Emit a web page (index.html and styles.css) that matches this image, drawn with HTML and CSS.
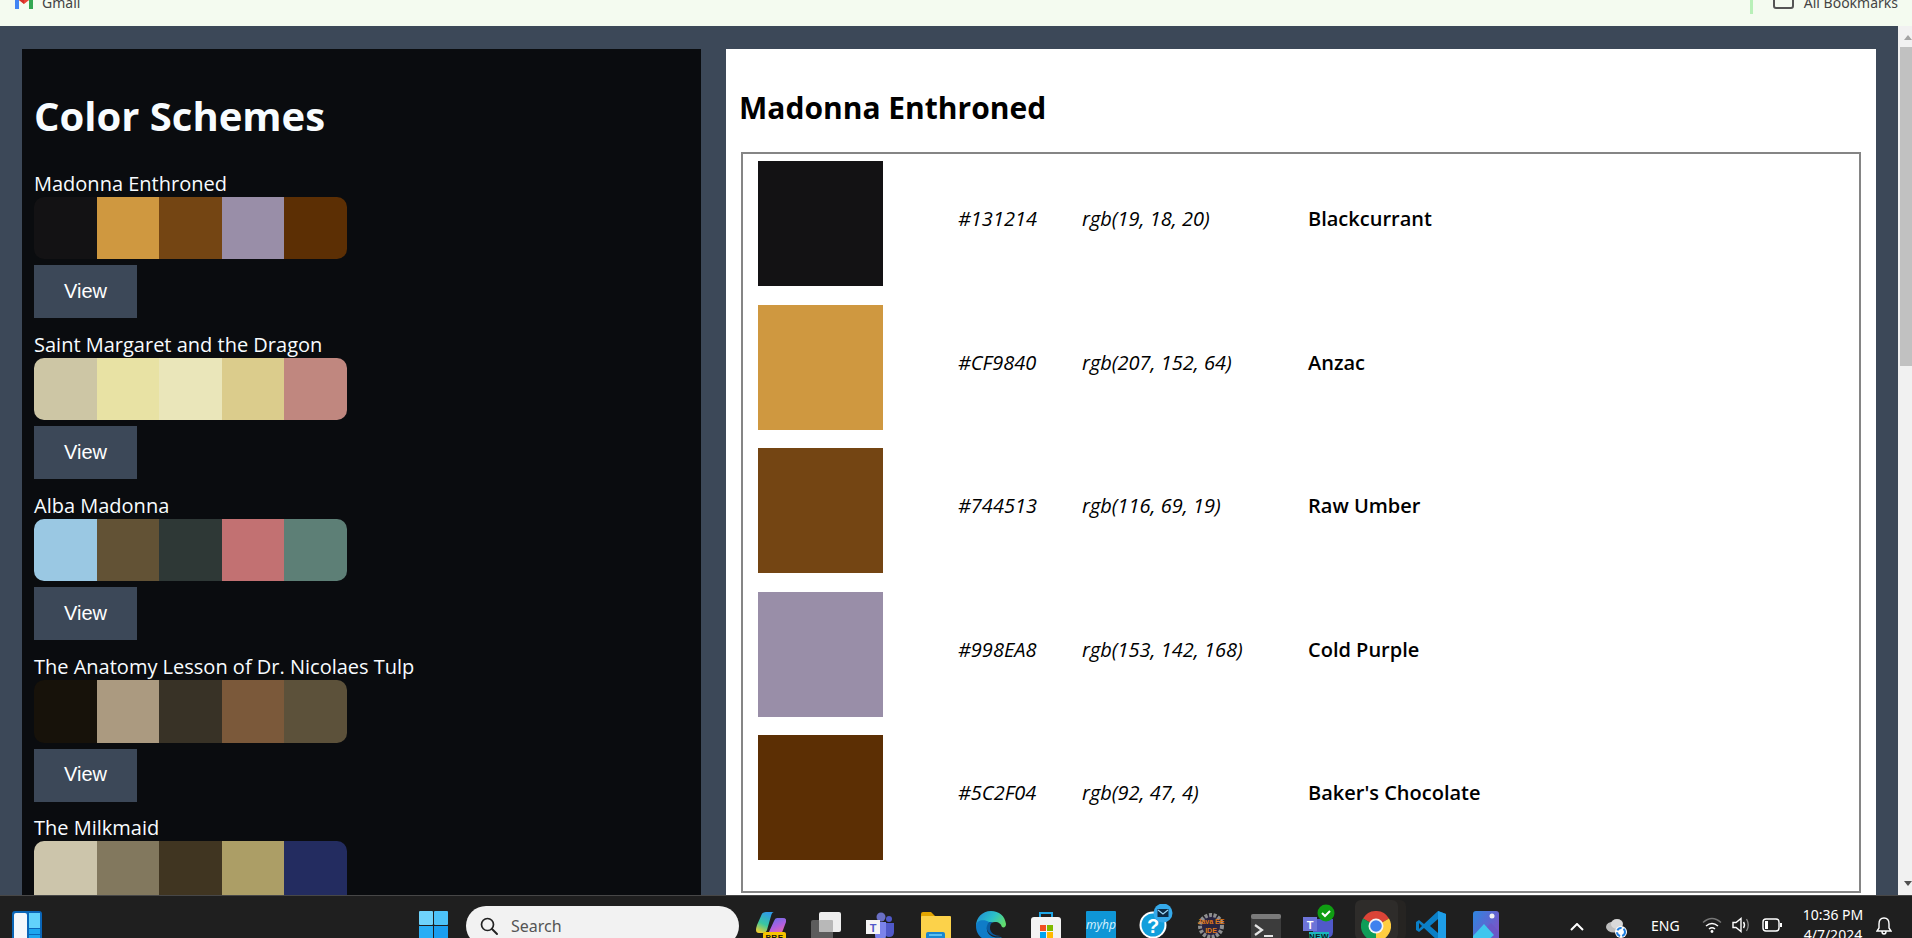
FILE: index.html
```html
<!DOCTYPE html>
<html lang="en">
<head>
<meta charset="utf-8">
<title>Color Schemes</title>
<link rel="stylesheet" href="styles.css">
</head>
<body>
<header class="chrome-bar">
  <div class="chrome-row">
    <a class="bookmark">
      <svg class="gmail" viewBox="0 0 18 14" width="18" height="14"><path fill="#4285f4" d="M0 2v12h4V5z"/><path fill="#34a853" d="M14 5v9h4V2z"/><path fill="#ea4335" d="M0 2l9 7 9-7V0h-2L9 5 2 0H0z"/><path fill="#c5221f" d="M4 5l5 4V5L2 0H0z" opacity=".6"/></svg>
      <span>Gmail</span>
    </a>
    <div class="bookmarks-right">
      <span class="sep"></span>
      <svg class="folder-outline" viewBox="0 0 21 14" width="21" height="14"><path fill="none" stroke="#555" stroke-width="2" d="M1 0v11q0 2 2 2h15q2 0 2-2V0"/></svg>
      <span>All Bookmarks</span>
    </div>
  </div>
</header>

<main class="page">
  <aside class="sidebar">
    <h1 class="sidebar-title">Color Schemes</h1>

    <section class="scheme">
      <div class="scheme-name">Madonna Enthroned</div>
      <div class="strip">
        <i style="background:#131214"></i><i style="background:#cf9840"></i><i style="background:#744513"></i><i style="background:#998ea8"></i><i style="background:#5c2f04"></i>
      </div>
      <button class="view-btn">View</button>
    </section>

    <section class="scheme">
      <div class="scheme-name">Saint Margaret and the Dragon</div>
      <div class="strip">
        <i style="background:#cdc6a5"></i><i style="background:#e8e2a4"></i><i style="background:#eae6ba"></i><i style="background:#dbcc8c"></i><i style="background:#c0877f"></i>
      </div>
      <button class="view-btn">View</button>
    </section>

    <section class="scheme">
      <div class="scheme-name">Alba Madonna</div>
      <div class="strip">
        <i style="background:#9ac8e3"></i><i style="background:#625235"></i><i style="background:#2e3836"></i><i style="background:#c27172"></i><i style="background:#5d7f76"></i>
      </div>
      <button class="view-btn">View</button>
    </section>

    <section class="scheme">
      <div class="scheme-name">The Anatomy Lesson of Dr. Nicolaes Tulp</div>
      <div class="strip">
        <i style="background:#17120a"></i><i style="background:#ab9a80"></i><i style="background:#383226"></i><i style="background:#7b593a"></i><i style="background:#5c513a"></i>
      </div>
      <button class="view-btn">View</button>
    </section>

    <section class="scheme">
      <div class="scheme-name">The Milkmaid</div>
      <div class="strip">
        <i style="background:#ccc5ab"></i><i style="background:#82785e"></i><i style="background:#403521"></i><i style="background:#ac9e66"></i><i style="background:#232c60"></i>
      </div>
      <button class="view-btn">View</button>
    </section>
  </aside>

  <section class="detail">
    <h2 class="detail-title">Madonna Enthroned</h2>
    <div class="color-table">
      <div class="color-row">
        <div class="swatch" style="background:#131214"></div>
        <div class="cell code">#131214</div>
        <div class="cell code">rgb(19, 18, 20)</div>
        <div class="cell color-name">Blackcurrant</div>
      </div>
      <div class="color-row">
        <div class="swatch" style="background:#cf9840"></div>
        <div class="cell code">#CF9840</div>
        <div class="cell code">rgb(207, 152, 64)</div>
        <div class="cell color-name">Anzac</div>
      </div>
      <div class="color-row">
        <div class="swatch" style="background:#744513"></div>
        <div class="cell code">#744513</div>
        <div class="cell code">rgb(116, 69, 19)</div>
        <div class="cell color-name">Raw Umber</div>
      </div>
      <div class="color-row">
        <div class="swatch" style="background:#998ea8"></div>
        <div class="cell code">#998EA8</div>
        <div class="cell code">rgb(153, 142, 168)</div>
        <div class="cell color-name">Cold Purple</div>
      </div>
      <div class="color-row">
        <div class="swatch" style="background:#5c2f04"></div>
        <div class="cell code">#5C2F04</div>
        <div class="cell code">rgb(92, 47, 4)</div>
        <div class="cell color-name">Baker's Chocolate</div>
      </div>
    </div>
  </section>

  <div class="scrollbar">
    <span class="arrow-up"></span>
    <span class="thumb"></span>
    <span class="arrow-down"></span>
  </div>
</main>

<footer class="taskbar">
  <svg class="widgets" viewBox="0 0 30 30" width="30" height="30"><rect width="30" height="30" rx="3" fill="#0a66b8"/><rect x="2" y="2" width="13" height="28" rx="2" fill="#f4f7fb"/><rect x="17" y="2" width="11" height="15" fill="#62d2fb"/><rect x="17" y="18" width="11" height="5" fill="#1ca6ef"/><rect x="17" y="24" width="11" height="6" fill="#1ca6ef"/></svg>

  <svg class="start" viewBox="0 0 29 29" width="29" height="29"><rect width="14" height="14" rx="1" fill="#6fd3fb"/><rect x="15" width="14" height="14" rx="1" fill="#4cc2f8"/><rect y="15" width="14" height="14" fill="#28aef5"/><rect x="15" y="15" width="14" height="14" fill="#1a9ef0"/></svg>

  <div class="search">
    <svg viewBox="0 0 18 18" width="18" height="18"><circle cx="7.5" cy="7.5" r="6" fill="none" stroke="#222" stroke-width="1.7"/><path d="M12 12l5 5" stroke="#222" stroke-width="1.9" stroke-linecap="round"/></svg>
    <span>Search</span>
  </div>

  <div class="apps">
    <div class="app">
      <svg viewBox="0 0 30 30" width="30" height="30"><defs><linearGradient id="cpa" x1=".6" y1="0" x2=".2" y2="1"><stop offset="0" stop-color="#2f9be8"/><stop offset=".55" stop-color="#39c6a0"/><stop offset="1" stop-color="#f4d02e"/></linearGradient><linearGradient id="cpb" x1=".3" y1="0" x2=".8" y2="1"><stop offset="0" stop-color="#6a6fe6"/><stop offset=".5" stop-color="#b05fe0"/><stop offset="1" stop-color="#f36c9c"/></linearGradient></defs><path fill="url(#cpb)" d="M12 23h10q4 0 5-4l3-8q1-4-3-4h-6q-2 0-3 3z"/><path fill="url(#cpa)" d="M10 1h8q-2 0-3 4l-4 14q-1 3-4 3H3q-3 0-3-3 0-2 1-5L5 5q1-4 5-4z"/><rect x="7" y="21" width="23" height="9" rx="2" fill="#f8c400"/><text x="18.500" y="29" class="svg-badge" fill="#111">PRE</text></svg>
    </div>
    <div class="app">
      <svg viewBox="0 0 30 30" width="30" height="30"><rect x="0" y="9" width="22" height="21" rx="2" fill="#5c5c5c"/><rect x="8" y="1" width="22" height="20" rx="2" fill="#eeeeee"/><rect x="8" y="9" width="14" height="12" rx="1" fill="#b8b8b8"/></svg>
    </div>
    <div class="app">
      <svg viewBox="0 0 30 30" width="30" height="30"><circle cx="15" cy="6" r="4.5" fill="#6a6fc4"/><circle cx="23" cy="8" r="3" fill="#5059c9"/><path fill="#7b83eb" d="M9 11h11v13q0 6-5 6-6 0-6-6z"/><path fill="#5059c9" d="M20 12h8v9q0 5-5 5-2 0-3-1z"/><rect x="0" y="9" width="14" height="14" fill="#f5f5f5"/><text x="7" y="21" class="svg-t" fill="#5059c9">T</text></svg>
    </div>
    <div class="app">
      <svg viewBox="0 0 30 30" width="30" height="30"><path fill="#e3a500" d="M0 3q0-2 2-2h8l4 4h14v6H0z"/><rect y="5" width="30" height="25" rx="1" fill="#fcd24a"/><rect x="5" y="21" width="19" height="9" rx="2" fill="#1a86cf"/><rect x="8" y="23" width="13" height="2" fill="#5cc0f0"/></svg>
    </div>
    <div class="app">
      <svg viewBox="0 0 30 30" width="30" height="30"><defs><linearGradient id="edge" x1="0" y1=".2" x2="1" y2=".6"><stop offset="0" stop-color="#1f8fd6"/><stop offset=".55" stop-color="#2cc0c8"/><stop offset="1" stop-color="#62dc6e"/></linearGradient></defs><path fill="url(#edge)" d="M15 0C6 0 0 7 0 15h12c1-3 4-4 7-4 4 0 6 2 7 5 2 1 4 0 4-3C29 5 23 0 15 0z"/><path fill="#0f7cc8" d="M0 15c0 9 7 15 15 15 4 0 8-1 11-4-7 2-14-1-15-7-.5-3 .5-6 2-8C8 8 0 9 0 15z"/><path fill="#0a5aa0" d="M13 11c-3 3-3 8 0 11 3 3 8 4 12 3-6 0-11-3-11-8 0-3 1-5 3-6z"/></svg>
    </div>
    <div class="app">
      <svg viewBox="0 0 30 30" width="30" height="30"><path fill="none" stroke="#1ea7e8" stroke-width="2" d="M9 6V2h12v4"/><rect y="6" width="30" height="24" rx="3" fill="#f3f3f3"/><rect x="9" y="14" width="6" height="6" fill="#f25022"/><rect x="16" y="14" width="6" height="6" fill="#7fba00"/><rect x="9" y="21" width="6" height="6" fill="#00a4ef"/><rect x="16" y="21" width="6" height="6" fill="#ffb900"/></svg>
    </div>
    <div class="app">
      <svg viewBox="0 0 30 30" width="30" height="30"><rect width="30" height="30" rx="1" fill="#0f96d6"/><text x="15" y="18" class="svg-hp" fill="#d8f2ff">myhp</text></svg>
    </div>
    <div class="app app-help">
      <svg viewBox="0 0 36 36" width="36" height="36"><circle cx="15" cy="21" r="13.5" fill="#fff"/><circle cx="15" cy="21" r="11.5" fill="#119fdc"/><text x="15" y="29" class="svg-q" fill="#fff">?</text><circle cx="25" cy="9" r="9.5" fill="#35a9ea"/><rect x="19.500" y="5" width="11" height="8" fill="#0d2a44"/><path d="M20 6l5 4 5-4" fill="none" stroke="#9dd8f7" stroke-width="1.200"/></svg>
    </div>
    <div class="app">
      <svg viewBox="0 0 30 30" width="30" height="30"><circle cx="15" cy="15" r="11" fill="#2a2440" stroke="#8f8f8f" stroke-width="4" stroke-dasharray="3 1.500"/><text x="15" y="13" class="svg-java" fill="#e07a18">Java EE</text><text x="15" y="22" class="svg-java" fill="#e07a18">IDE</text></svg>
    </div>
    <div class="app app-term">
      <svg viewBox="0 0 30 30" width="30" height="30"><rect width="30" height="27" rx="2" fill="#3c3c3c"/><rect width="30" height="5" rx="2" fill="#7a7a7a"/><path d="M4 11l7 5-7 5" fill="none" stroke="#e4e4e4" stroke-width="2.200"/><path d="M13 22h9" stroke="#e4e4e4" stroke-width="2"/></svg>
    </div>
    <div class="app app-teams">
      <svg viewBox="0 0 36 36" width="36" height="36"><path fill="#5059c9" d="M10 15h20v13q0 6-8 6-12 0-12-6z"/><rect x="0" y="13" width="14" height="14" fill="#6d74d8"/><text x="7" y="25" class="svg-t" fill="#fff">T</text><circle cx="23" cy="9" r="8.500" fill="#0f9d12"/><path d="M19 9l3 3 5-5" fill="none" stroke="#fff" stroke-width="2"/><rect x="6" y="28" width="20" height="8" fill="#19b6bb"/><text x="16" y="35" class="svg-badge" fill="#0b1b1b">NEW</text></svg>
    </div>
    <div class="app app-active">
      <span class="active-back"></span>
      <span class="active-tile"></span>
      <svg viewBox="0 0 30 30" width="30" height="30"><path fill="#db4437" d="M15 15L28 7.500A15 15 0 0 0 2 7.500z"/><path fill="#ffcd40" d="M15 15v15A15 15 0 0 0 28 7.500z"/><path fill="#0f9d58" d="M15 15L2 7.500A15 15 0 0 0 15 30z"/><circle cx="15" cy="15" r="7.500" fill="#f5f5f5"/><circle cx="15" cy="15" r="5.800" fill="#3f82ee"/></svg>
    </div>
    <div class="app">
      <svg viewBox="0 0 30 30" width="30" height="30"><path fill="#0b7fc7" d="M22 0l8 3v24l-8 3-14-13-5 4-3-2V11l3-2 5 4z"/><path fill="#1e9ee8" d="M22 0l8 3v24l-8 3z"/><path fill="#1f1f1f" d="M22 8v14l-8-7z"/><path fill="#1f1f1f" d="M3 12v6l3-3z"/></svg>
    </div>
    <div class="app">
      <svg viewBox="0 0 26 30" width="26" height="30"><defs><linearGradient id="ph" x1="0" y1="0" x2="1" y2=".6"><stop offset="0" stop-color="#2d86e0"/><stop offset="1" stop-color="#7a55c8"/></linearGradient></defs><rect width="26" height="30" rx="3" fill="url(#ph)"/><circle cx="19" cy="5" r="2.500" fill="#f2f2f2"/><path fill="#6b58c8" d="M14 16l4-4 8 9v9H12z"/><path fill="#3fc6ee" d="M0 25l11-12 10 11-7 6H0z"/></svg>
    </div>
  </div>

  <div class="tray">
    <svg class="tray-chevron" viewBox="0 0 14 8" width="14" height="8"><path d="M1 7l6-6 6 6" fill="none" stroke="#fff" stroke-width="2"/></svg>
    <svg class="tray-cloud" viewBox="0 0 21 20" width="21" height="20"><ellipse cx="8" cy="9" rx="8" ry="5.500" fill="#bdbdbd"/><ellipse cx="11" cy="6" rx="6" ry="5" fill="#d9d9d9"/><circle cx="15" cy="14" r="6" fill="#fff"/><circle cx="15" cy="14" r="4" fill="none" stroke="#1f7fe0" stroke-width="2" stroke-dasharray="5 2"/></svg>
    <span class="tray-lang">ENG</span>
    <svg class="tray-wifi" viewBox="0 0 20 16" width="20" height="16"><path d="M1 5.500q9-8 18 0" fill="none" stroke="#777" stroke-width="1.400"/><path d="M4 9q6-5 12 0M7 12q3-2.500 6 0" fill="none" stroke="#fff" stroke-width="1.500"/><circle cx="10" cy="14.500" r="1.400" fill="#fff"/></svg>
    <svg class="tray-vol" viewBox="0 0 18 16" width="18" height="16"><path d="M1 5.500h3l5-4v13l-5-4H1z" fill="none" stroke="#fff" stroke-width="1.400"/><path d="M11.500 5q2 3 0 6" fill="none" stroke="#fff" stroke-width="1.400"/><path d="M14.500 2q3.500 6 0 12" fill="none" stroke="#888" stroke-width="1.300"/></svg>
    <svg class="tray-bat" viewBox="0 0 20 14" width="20" height="14"><rect x="1" y="1" width="16" height="12" rx="3" fill="none" stroke="#fff" stroke-width="1.400"/><rect x="3" y="3" width="3" height="8" fill="#fff"/><rect x="18" y="5" width="2" height="4" fill="#fff"/></svg>
    <div class="tray-clock"><div>10:36 PM</div><div>4/7/2024</div></div>
    <svg class="tray-bell" viewBox="0 0 16 18" width="16" height="18"><path d="M8 1q-5 0-5 6v4l-2 3h14l-2-3V7q0-6-5-6zM6 14.500q0 2.500 2 2.500t2-2.500" fill="none" stroke="#fff" stroke-width="1.400"/></svg>
  </div>
</footer>
</body>
</html>
```

FILE: styles.css
```css
* { box-sizing: border-box; }

html, body {
  margin: 0;
  height: 938px;
  overflow: hidden;
}

body {
  display: flex;
  flex-direction: column;
  font-family: "Open Sans", "Noto Sans", sans-serif;
  background: #3c4858;
}

/* Browser bookmarks bar, cropped by the top of the picture */
.chrome-bar {
  height: 26px;
  flex: none;
  overflow: hidden;
  background: #f4fbf0;
}

.chrome-row {
  display: flex;
  justify-content: space-between;
  align-items: center;
  height: 24px;
  margin-top: -10px;
  padding: 0 14px 0 15px;
  font: 14px "Noto Sans", sans-serif;
  color: #444;
}

.bookmark,
.bookmarks-right {
  display: flex;
  align-items: center;
}

.gmail { margin-right: 9px; }

.sep {
  width: 3px;
  height: 24px;
  margin-right: 20px;
  background: #b8f0b8;
}

.folder-outline { margin-right: 10px; }

/* Page */
.page {
  flex: 1;
  min-height: 0;
  display: flex;
  overflow: hidden;
  padding: 23px 0 0 22px;
  background: #3c4858;
}

.sidebar {
  flex: none;
  width: 679px;
  height: 1000px;
  padding: 0 12px;
  background: #0a0c0f;
  color: #f8fcff;
}

.sidebar-title {
  margin: 40px 0 26.7px;
  font-size: 40px;
  line-height: 54px;
  font-weight: 700;
}

.scheme { margin-bottom: 12.65px; }

.scheme-name {
  font-size: 20px;
  line-height: 27px;
}

.strip {
  display: flex;
  width: 313px;
  height: 62.5px;
  border-radius: 10px;
  overflow: hidden;
}

.strip i {
  flex: 1;
  display: block;
}

.view-btn {
  display: block;
  width: 103px;
  height: 53px;
  margin-top: 6px;
  padding: 0 0 1px;
  border: 0;
  background: #3c4858;
  color: #fff;
  font: 20px "Liberation Sans", Arial, sans-serif;
}

.detail {
  flex: none;
  width: 1150px;
  height: 900px;
  margin-left: 25px;
  padding: 38px 15px 0 13px;
  background: #fff;
  color: #000;
}

.detail-title {
  margin: 0 0 24px;
  font-size: 30px;
  line-height: 41px;
  font-weight: 700;
}

.color-table {
  margin-left: 2px;
  height: 741px;
  padding: 7px 14px 0 15px;
  border: 2px solid #858585;
}

.color-row {
  display: grid;
  grid-template-columns: 125px 75px 124px 226px 1fr;
  height: 143.6px;
  align-items: start;
}

.swatch {
  grid-column: 1;
  width: 125px;
  height: 125px;
}

.cell {
  font-size: 20px;
  line-height: 27px;
  padding-top: 44px;
}

.code { font-style: italic; }

.code:nth-child(2) { grid-column: 3; }
.code:nth-child(3) { grid-column: 4; }

.color-name {
  grid-column: 5;
  font-weight: 600;
}

.scrollbar {
  position: relative;
  flex: none;
  width: 14px;
  height: 869px;
  margin-top: -23px;
  margin-left: 22px;
  background: #f1f1f1;
}

.thumb {
  position: absolute;
  top: 21px;
  right: 0;
  width: 12px;
  height: 319px;
  background: #c1c1c1;
}

.arrow-up,
.arrow-down {
  position: absolute;
  right: 0;
  width: 0;
  height: 0;
  border-left: 4px solid transparent;
  border-right: 4px solid transparent;
}

.arrow-up {
  top: 9px;
  border-bottom: 5px solid #a3a3a3;
}

.arrow-down {
  bottom: 9px;
  border-top: 5px solid #505050;
}

/* Windows taskbar, cropped by the bottom of the picture */
.taskbar {
  flex: none;
  height: 43px;
  display: flex;
  align-items: flex-start;
  overflow: hidden;
  border-top: 1px solid #474747;
  background: #1f1f1f;
  color: #fff;
}

.taskbar svg { flex: none; }

.widgets { margin: 15px 0 0 12px; }
.start { margin: 15px 0 0 377px; }

.search {
  flex: none;
  display: flex;
  align-items: center;
  width: 273px;
  height: 40px;
  margin: 10px 0 0 18px;
  padding-left: 14px;
  border-radius: 20px;
  background: #f2f2f2;
  color: #555;
  font: 16px "Noto Sans", sans-serif;
}

.search span { margin-left: 13px; }

.apps {
  display: flex;
  margin-left: 4px;
}

.app {
  position: relative;
  flex: none;
  display: flex;
  justify-content: center;
  width: 55px;
  height: 42px;
  padding-top: 15px;
}

.app-help,
.app-teams { padding-top: 8px; }

.app-term { padding-top: 18px; }

.app-active svg { position: relative; }

.active-tile {
  position: absolute;
  top: 4px;
  left: 7px;
  width: 43px;
  height: 40px;
  border-radius: 6px;
  background: #2e2c2a;
}

.active-back {
  position: absolute;
  top: 4px;
  left: 12px;
  width: 46px;
  height: 40px;
  border-radius: 6px;
  background: #262422;
}

.svg-badge {
  font: 700 8px "Liberation Sans", sans-serif;
  text-anchor: middle;
  letter-spacing: .5px;
}

.svg-t {
  font: 700 11px "Liberation Sans", sans-serif;
  text-anchor: middle;
}

.svg-hp {
  font: italic 12px "Open Sans", sans-serif;
  text-anchor: middle;
}

.svg-q {
  font: 700 20px "Liberation Sans", sans-serif;
  text-anchor: middle;
}

.svg-java {
  font: 700 7px "Liberation Sans", sans-serif;
  text-anchor: middle;
}

.tray {
  flex: none;
  display: flex;
  align-items: flex-start;
  margin-left: 57px;
}

.tray-chevron { margin-top: 27px; }
.tray-cloud { margin: 22px 0 0 22px; }

.tray-lang {
  margin: 20px 0 0 24px;
  font: 14px/20px "Noto Sans", sans-serif;
}

.tray-wifi { margin: 21px 0 0 22px; }
.tray-vol { margin: 21px 0 0 10px; }
.tray-bat { margin: 22px 0 0 12px; }

.tray-clock {
  margin: 9px 0 0 21px;
  font: 14px/20px "Noto Sans", sans-serif;
  text-align: center;
}

.tray-bell { margin: 21px 0 0 13px; }
```
